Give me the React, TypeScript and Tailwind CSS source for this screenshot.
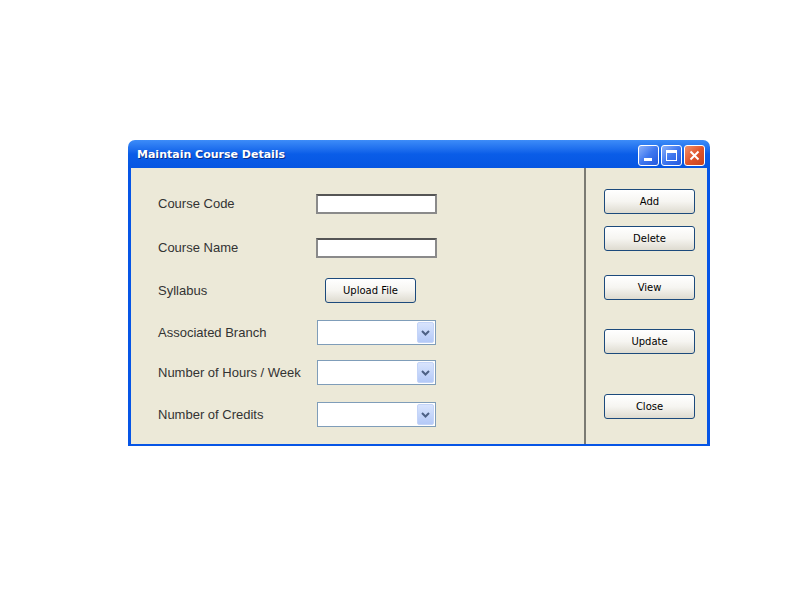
import React from 'react';

const label = 'text-[13px] text-[#333] w-[158px] shrink-0';
const labelFont = { fontFamily: '"Liberation Sans", Arial, sans-serif' };
const btnFont = { fontFamily: '"DejaVu Sans", Tahoma, sans-serif' };

const XpButton = ({ children, className = '' }: { children: React.ReactNode; className?: string }) => (
  <button
    className={`w-[91px] h-[25px] rounded-[3px] border border-[#1c4a7c] bg-gradient-to-b from-white via-[#f6f5f1] to-[#dedbd0] text-[10px] text-black flex items-center justify-center ${className}`}
    style={btnFont}
  >
    {children}
  </button>
);

const TextBox = () => (
  <div className="w-[121px] h-[20px] bg-white border-2 border-[#8a8a8a] border-t-[#555]" />
);

const Dropdown = () => (
  <div className="w-[119px] h-[25px] bg-white border border-[#7f9db9] flex justify-end items-stretch p-[1px]">
    <div className="w-[17px] rounded-[2px] bg-gradient-to-b from-[#d8e4fd] to-[#b4c9f7] border border-[#c4d4f8] flex items-center justify-center">
      <svg width="9" height="6" viewBox="0 0 9 6">
        <path d="M1 1 L4.5 4.5 L8 1" stroke="#4d6185" strokeWidth="2" fill="none" />
      </svg>
    </div>
  </div>
);

const TitleButton = ({ kind }: { kind: 'min' | 'max' | 'close' }) => (
  <div
    className={`w-[21px] h-[21px] rounded-[3px] border border-white flex items-center justify-center ${
      kind === 'close'
        ? 'bg-gradient-to-br from-[#f0906a] via-[#e0552c] to-[#c8431e]'
        : 'bg-gradient-to-br from-[#8cb0f8] via-[#3f77ef] to-[#2558dd]'
    }`}
  >
    {kind === 'min' && <div className="w-[8px] h-[3px] bg-white mt-[8px] -ml-[2px]" />}
    {kind === 'max' && <div className="w-[11px] h-[11px] border border-white border-t-[3px]" />}
    {kind === 'close' && (
      <svg width="11" height="11" viewBox="0 0 11 11">
        <path d="M1.5 1.5 L9.5 9.5 M9.5 1.5 L1.5 9.5" stroke="white" strokeWidth="2" />
      </svg>
    )}
  </div>
);

export default function App() {
  return (
    <div className="w-[800px] h-[600px] bg-white pt-[140px] pl-[128px]">
      <div className="w-[582px] flex flex-col">
        {/* title bar */}
        <div className="h-[28px] rounded-t-[7px] bg-gradient-to-b from-[#3d8cf8] via-[#0a5de8] to-[#0656e2] flex items-center justify-between pl-[9px] pr-[5px]">
          <span
            className="text-white font-bold text-[11px] mt-[2px] [text-shadow:1px_1px_0_#0a2f8a]"
            style={btnFont}
          >
            Maintain Course Details
          </span>
          <div className="flex gap-[2px] pt-[2px]">
            <TitleButton kind="min" />
            <TitleButton kind="max" />
            <TitleButton kind="close" />
          </div>
        </div>

        {/* body */}
        <div className="flex bg-[#ece9d8] border-[3px] border-t-0 border-[#0655e6] border-b-2 h-[278px]">
          <div className="w-[453px] pl-[27px] pt-[26px] flex flex-col" style={labelFont}>
            <div className="flex items-center h-[20px]">
              <span className={label}>Course Code</span>
              <TextBox />
            </div>
            <div className="flex items-center h-[20px] mt-[24px]">
              <span className={label}>Course Name</span>
              <TextBox />
            </div>
            <div className="flex items-center h-[25px] mt-[20px]">
              <span className={label}>Syllabus</span>
              <XpButton className="ml-[9px]">Upload File</XpButton>
            </div>
            <div className="flex items-center h-[25px] mt-[17px]">
              <span className={label}>Associated Branch</span>
              <div className="ml-[1px]"><Dropdown /></div>
            </div>
            <div className="flex items-center h-[25px] mt-[15px]">
              <span className={label}>Number of Hours / Week</span>
              <div className="ml-[1px]"><Dropdown /></div>
            </div>
            <div className="flex items-center h-[25px] mt-[17px]">
              <span className={label}>Number of Credits</span>
              <div className="ml-[1px]"><Dropdown /></div>
            </div>
          </div>

          <div className="w-[2px] bg-[#7b7b73]" />

          <div className="flex-1 pl-[18px] pt-[21px] flex flex-col">
            <XpButton>Add</XpButton>
            <XpButton className="mt-[12px]">Delete</XpButton>
            <XpButton className="mt-[24px]">View</XpButton>
            <XpButton className="mt-[29px]">Update</XpButton>
            <XpButton className="mt-[40px]">Close</XpButton>
          </div>
        </div>
      </div>
    </div>
  );
}
